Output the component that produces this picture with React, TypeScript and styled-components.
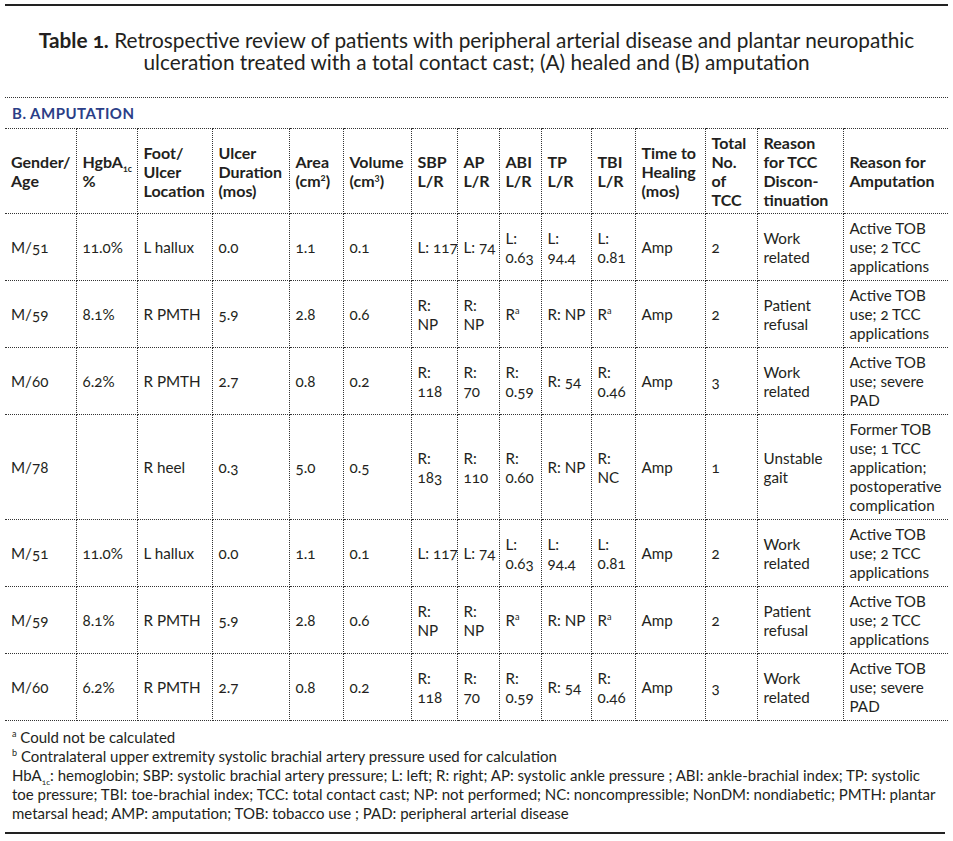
import React from "react";
import styled, { createGlobalStyle } from "styled-components";

const GlobalStyle = createGlobalStyle`
  html, body {
    margin: 0;
    padding: 0;
    background: #fff;
    color: #231f20;
    font-family: Lato, "Open Sans", sans-serif;
  }
`;

const Page = styled.div`
  width: 943px;
  padding: 4px 5px 0 5px;
`;

const TopRule = styled.div`
  height: 2px;
  background: #222;
`;

const Caption = styled.h1`
  margin: 0;
  padding: 23px 20px 24px;
  text-align: center;
  font-size: 20.8px;
  font-weight: 400;
  line-height: 22px;
  font-variant-numeric: oldstyle-nums;
`;

const CaptionLabel = styled.span`
  font-weight: 700;
`;

const Section = styled.h2`
  margin: 0;
  padding: 0 7px;
  height: 30px;
  display: flex;
  align-items: center;
  border-top: 1px dotted #333;
  font-size: 15px;
  font-weight: 700;
  color: #2b3e87;
  letter-spacing: 0.5px;
`;

const Table = styled.table`
  width: 943px;
  border-collapse: collapse;
  table-layout: fixed;
  font-variant-numeric: oldstyle-nums;
`;

const Th = styled.th`
  border: 1px dotted #333;
  padding: 4px 2px 4px 6px;
  text-align: left;
  vertical-align: middle;
  font-size: 16px;
  font-weight: 700;
  line-height: 19px;
  white-space: pre-line;
  &:first-child { border-left: 0; }
  &:last-child { border-right: 0; }
`;

const Td = styled.td`
  border: 1px dotted #333;
  padding: 5px 2px 4px 6px;
  text-align: left;
  vertical-align: middle;
  font-size: 15.2px;
  line-height: 19px;
  white-space: pre-line;
  &:first-child { border-left: 0; }
  &:last-child { border-right: 0; }
`;

const Notes = styled.div`
  margin-right: 3px;
  padding: 7px 7px 9px;
  border-bottom: 2px solid #222;
  font-size: 15px;
  line-height: 19px;
  font-variant-numeric: oldstyle-nums;
`;

const Note = styled.div``;

const Sup = styled.sup`
  font-size: 0.6em;
  line-height: 0;
`;

const Sub = styled.sub`
  font-size: 0.55em;
  line-height: 0;
`;

const widths = [71, 61, 75, 77, 54, 68, 46, 42, 42, 50, 44, 70, 52, 86, 105];

type Row = React.ReactNode[];

const ra = (
  <>
    R<Sup>a</Sup>
  </>
);

const nb = "\u00a0";

const rowA: Row = ["M/51", "11.0%", "L hallux", "0.0", "1.1", "0.1", `L:${nb}117`, `L:${nb}74`, "L:\n0.63", "L:\n94.4", "L:\n0.81", "Amp", "2", "Work related", "Active TOB use; 2 TCC applications"];
const rowB: Row = ["M/59", "8.1%", "R PMTH", "5.9", "2.8", "0.6", "R:\nNP", "R:\nNP", ra, `R:${nb}NP`, ra, "Amp", "2", "Patient refusal", "Active TOB use; 2 TCC applications"];
const rowC: Row = ["M/60", "6.2%", "R PMTH", "2.7", "0.8", "0.2", "R:\n118", "R:\n70", "R:\n0.59", `R:${nb}54`, "R:\n0.46", "Amp", "3", "Work related", "Active TOB use; severe PAD"];
const rowD: Row = ["M/78", "", "R heel", "0.3", "5.0", "0.5", "R:\n183", "R:\n110", "R:\n0.60", `R:${nb}NP`, "R:\nNC", "Amp", "1", "Unstable gait", "Former TOB use; 1 TCC application; postoperative complication"];

const rows: Row[] = [rowA, rowB, rowC, rowD, rowA, rowB, rowC];

const headers: React.ReactNode[] = [
  "Gender/\nAge",
  <>
    HgbA<Sub>1c</Sub>
    {"\n%"}
  </>,
  "Foot/\nUlcer\nLocation",
  "Ulcer\nDuration\n(mos)",
  <>
    {"Area\n(cm"}
    <Sup>2</Sup>)
  </>,
  <>
    {"Volume\n(cm"}
    <Sup>3</Sup>)
  </>,
  "SBP\nL/R",
  "AP\nL/R",
  "ABI\nL/R",
  "TP\nL/R",
  "TBI\nL/R",
  "Time to\nHealing\n(mos)",
  "Total\nNo.\nof\nTCC",
  "Reason\nfor TCC\nDiscon-\ntinuation",
  "Reason for\nAmputation",
];

export default function App() {
  return (
    <Page>
      <GlobalStyle />
      <TopRule />
      <Caption>
        <CaptionLabel>Table 1.</CaptionLabel> Retrospective review of patients
        with peripheral arterial disease and plantar neuropathic ulceration
        treated with a total contact cast; (A) healed and (B) amputation
      </Caption>
      <Section>B. AMPUTATION</Section>
      <Table>
        <colgroup>
          {widths.map((w, i) => (
            <col key={i} style={{ width: w }} />
          ))}
        </colgroup>
        <thead>
          <tr>
            {headers.map((h, i) => (
              <Th key={i}>{h}</Th>
            ))}
          </tr>
        </thead>
        <tbody>
          {rows.map((r, i) => (
            <tr key={i}>
              {r.map((c, j) => (
                <Td key={j}>{c}</Td>
              ))}
            </tr>
          ))}
        </tbody>
      </Table>
      <Notes>
        <Note>
          <Sup>a</Sup> Could not be calculated
        </Note>
        <Note>
          <Sup>b</Sup> Contralateral upper extremity systolic brachial artery
          pressure used for calculation
        </Note>
        <Note>
          HbA<Sub>1c</Sub>: hemoglobin; SBP: systolic brachial artery pressure;
          L: left; R: right; AP: systolic ankle pressure ; ABI: ankle-brachial
          index; TP: systolic toe pressure; TBI: toe-brachial index; TCC: total
          contact cast; NP: not performed; NC: noncompressible; NonDM:
          nondiabetic; PMTH: plantar metarsal head; AMP: amputation; TOB:
          tobacco use ; PAD: peripheral arterial disease
        </Note>
      </Notes>
    </Page>
  );
}
